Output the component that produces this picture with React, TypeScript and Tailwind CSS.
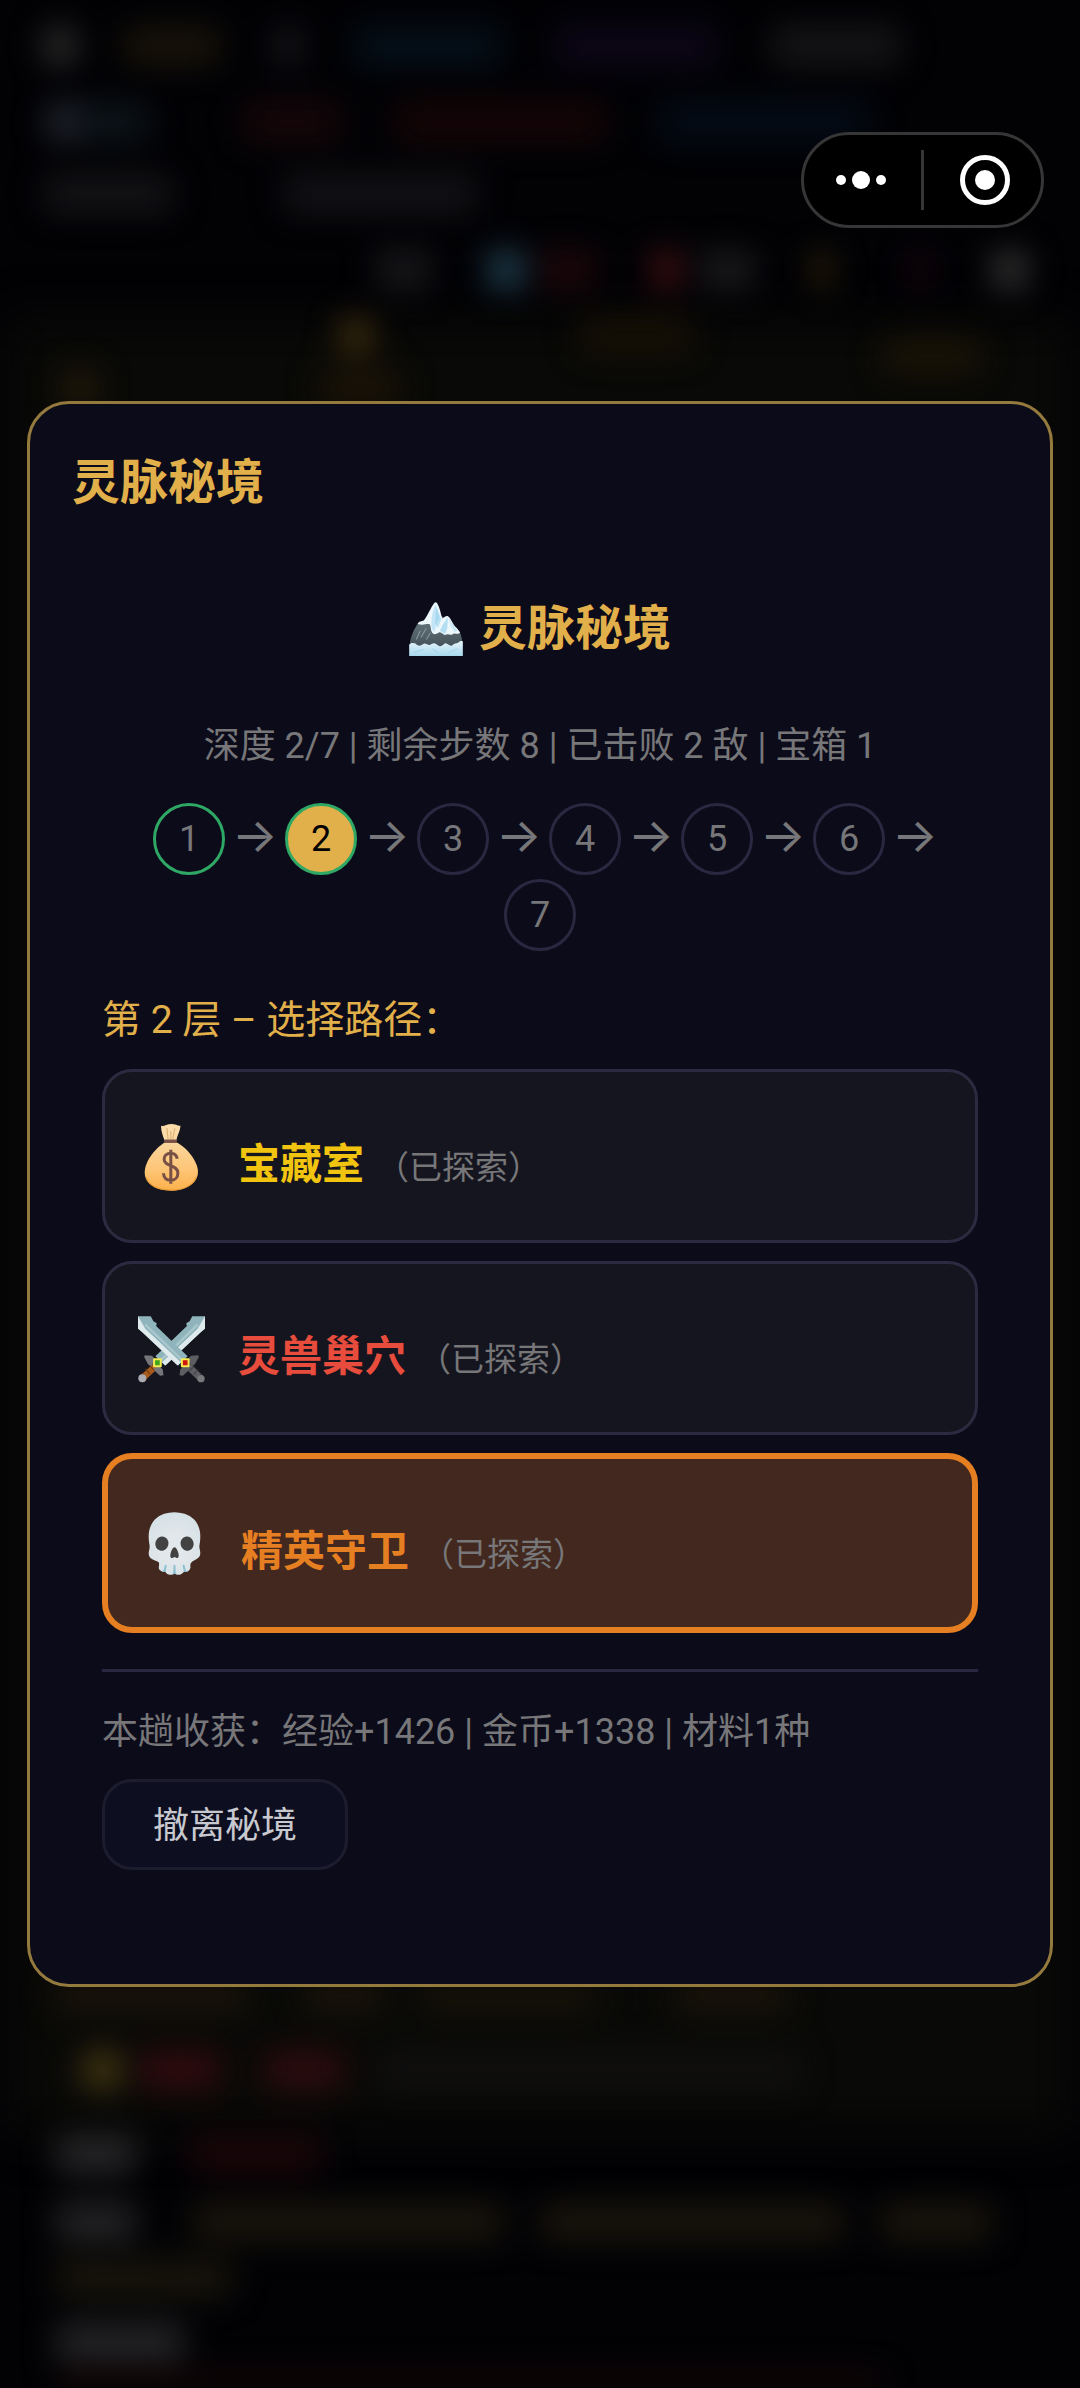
import type { ReactNode } from "react";

type Row = { row: string; items: string[] };

const topRows: Row[] = [
  {
    row: "mt-7 h-9",
    items: [
      "ml-11 w-8 bg-[#2f2f2f]",
      "ml-12 w-24 bg-[#1b150a]",
      "ml-14 w-6 bg-[#1c1c20]",
      "ml-14 w-36 bg-[#05111c]",
      "ml-14 w-40 bg-[#0f071a]",
      "ml-14 w-32 bg-[#171719]",
    ],
  },
  {
    row: "mt-10 h-9",
    items: [
      "ml-12 w-8 bg-[#262a34]",
      "ml-1 w-16 bg-[#0e161b]",
      "ml-24 w-24 bg-[#190709]",
      "ml-14 w-52 bg-[#180607]",
      "ml-14 w-52 bg-[#040d19]",
    ],
  },
  {
    row: "mt-9 h-9",
    items: ["ml-11 w-32 bg-[#151518]", "ml-28 w-48 bg-[#141418]"],
  },
  {
    row: "mt-10 h-9",
    items: [
      "ml-[376px] w-14 bg-[#19191c]",
      "ml-14 w-9 bg-[#234456]",
      "ml-4 w-14 bg-[#20080b]",
      "ml-14 w-7 bg-[#4a1115]",
      "ml-5 w-14 bg-[#1b1b1d]",
      "ml-14 w-5 bg-[#33270a]",
      "ml-20 w-4 bg-[#220710]",
      "ml-16 w-9 bg-[#343434]",
    ],
  },
  {
    row: "mt-8 h-8",
    items: [
      "ml-[340px] w-8 bg-[#46330f]",
      "ml-52 w-28 bg-[#191205]",
      "ml-48 mt-5 w-24 bg-[#1c1506]",
    ],
  },
  {
    row: "mt-5 h-8",
    items: ["ml-16 w-8 bg-[#2a1f0a]", "ml-56 w-20 bg-[#1d1506]"],
  },
];

const bottomRows: Row[] = [
  {
    row: "h-8",
    items: [
      "ml-14 w-48 bg-[#1b150a]",
      "ml-14 w-20 bg-[#1b150a]",
      "ml-9 w-44 bg-[#171308]",
      "ml-20 w-28 bg-[#1b150a]",
    ],
  },
  {
    row: "mt-10 h-9",
    items: [
      "ml-[84px] w-9 bg-[#4c3d12]",
      "ml-5 w-20 bg-[#340b0e]",
      "ml-11 w-20 bg-[#310c0f]",
      "ml-9 w-[420px] bg-[#111010]",
    ],
  },
  {
    row: "mt-12 h-9",
    items: ["ml-14 w-20 bg-[#29292a]", "ml-14 w-32 bg-[#1d0709]"],
  },
  {
    row: "mt-8 h-9",
    items: [
      "ml-14 w-20 bg-[#262627]",
      "ml-14 w-[312px] bg-[#1b160c]",
      "ml-9 w-[304px] bg-[#1b160c]",
      "ml-9 w-28 bg-[#1b160c]",
    ],
  },
  { row: "mt-5 h-9", items: ["ml-14 w-44 bg-[#1a160c]"] },
  { row: "mt-7 h-9", items: ["ml-14 w-32 bg-[#272729]"] },
  { row: "mt-4 h-3", items: ["ml-14 w-[828px] bg-[#1e0805]"] },
];

function BlurredRows({ rows }: { rows: Row[] }) {
  return (
    <div className="relative blur-lg">
      {rows.map((r, i) => (
        <div key={i} className={`flex ${r.row}`}>
          {r.items.map((item, j) => (
            <div key={j} className={`h-full shrink-0 rounded-lg ${item}`} />
          ))}
        </div>
      ))}
    </div>
  );
}

/* The game page behind the dialog, dimmed and out of focus. */
function Backdrop() {
  return (
    <div
      aria-hidden="true"
      className="absolute inset-0 flex flex-col justify-between overflow-hidden bg-[#020205]"
    >
      <div className="absolute inset-x-2 top-80 bottom-64 bg-[#090907] blur-xl" />
      <BlurredRows rows={topRows} />
      <BlurredRows rows={bottomRows} />
    </div>
  );
}

function Capsule() {
  return (
    <div className="absolute top-[132px] right-9 z-10 flex h-24 w-[243px] items-center rounded-full border-3 border-[#363637] bg-black">
      <button type="button" aria-label="更多" className="flex h-full flex-1 items-center justify-center pr-1">
        <svg width="50" height="18" viewBox="0 0 50 18" fill="#fff">
          <circle cx="5" cy="9" r="5" />
          <circle cx="25" cy="9" r="9" />
          <circle cx="45" cy="9" r="5" />
        </svg>
      </button>
      <span className="h-[60px] w-[3px] bg-[#363637]" />
      <button type="button" aria-label="关闭" className="flex h-full flex-1 items-center justify-center pl-1">
        <svg width="50" height="50" viewBox="0 0 50 50">
          <circle cx="25" cy="25" r="22.5" fill="none" stroke="#fff" strokeWidth="5" />
          <circle cx="25" cy="25" r="10" fill="#fff" />
        </svg>
      </button>
    </div>
  );
}

function Mountain() {
  return (
    <svg width="54" height="54" viewBox="33 27 159 160" aria-hidden="true">
      <defs>
        <linearGradient id="rock" x1="0" y1="0" x2="0" y2="1">
          <stop offset="0" stopColor="#6b7a82" />
          <stop offset="1" stopColor="#46535a" />
        </linearGradient>
        <linearGradient id="ice" x1="0" y1="0" x2="0" y2="1">
          <stop offset="0" stopColor="#e6f5fc" />
          <stop offset="1" stopColor="#a9d8ec" />
        </linearGradient>
      </defs>
      <path d="M34 160C36 130 48 105 60 90L80 84L112 60L150 80L182 115C188 125 191 140 191 160Z" fill="url(#rock)" />
      <path
        d="M58 92C62 84 70 84 76 82C88 68 96 44 108 29Q112 25 116 31C124 44 126 60 131 76C136 74 142 66 148 69C158 76 162 94 174 104L184 117C176 126 170 118 164 121C156 128 150 120 142 124C134 128 128 112 120 118C112 122 106 126 100 116C96 108 98 100 94 93C84 90 76 98 58 92Z"
        fill="#edf7fc"
      />
      <path d="M112 33C104 52 96 74 100 108L108 116L116 84L122 76Z" fill="#c3e5f6" />
      <path d="M113 40L128 78L118 104L110 90Z" fill="#8fcdec" opacity="0.55" />
      <path d="M148 72L134 92L124 112L140 122L146 104Z" fill="#b4dff3" />
      <path d="M150 76L156 100L168 116L176 112Z" fill="#c9e8f6" />
      <path d="M84 104L68 132M96 118L84 138M66 112L54 138" stroke="#8b989f" strokeWidth="3" fill="none" />
      <path
        d="M33 154C38 146 46 148 52 150C58 158 66 158 74 152C80 146 88 156 96 154C104 148 110 148 116 154C124 162 132 156 138 150C146 146 152 160 160 156C166 150 172 150 178 148C184 142 188 142 192 144V187H33Z"
        fill="url(#ice)"
      />
      <path d="M46 176L76 168M100 166L120 178M150 176L178 166" stroke="#8ecbe6" strokeWidth="2" fill="none" />
    </svg>
  );
}

function MoneyBag() {
  return (
    <svg width="67" height="67" viewBox="148 193 200 200" aria-hidden="true">
      <defs>
        <linearGradient id="bag" x1="0" y1="0" x2="0" y2="1">
          <stop offset="0" stopColor="#fcd69c" />
          <stop offset="0.55" stopColor="#fdc678" />
          <stop offset="1" stopColor="#fdb04a" />
        </linearGradient>
      </defs>
      <path d="M228 244C222 228 216 212 217 198Q224 200 232 196Q246 191 262 195Q268 199 275 198C274 214 264 228 262 244Z" fill="#fbdba8" />
      <path d="M234 205L238 238M258 206L252 238M246 215V238" stroke="#d9ad6f" strokeWidth="3" fill="none" />
      <path
        d="M228 248C206 260 168 300 168 338C168 374 206 392 246 392C290 392 327 370 327 336C327 302 290 260 263 248Z"
        fill="url(#bag)"
      />
      <path d="M172 352C182 380 212 390 246 390C284 390 312 376 323 350" stroke="#e59a35" strokeWidth="3" fill="none" />
      <rect x="226" y="239" width="38" height="10" rx="4" fill="#795046" />
      <path
        d="M246 270V371M265 297C263 285 255 280 246 280C234 280 226 287 226 298C226 322 267 313 267 339C267 352 258 361 246 361C233 361 225 353 224 340"
        stroke="#795046"
        strokeWidth="9"
        fill="none"
      />
    </svg>
  );
}

function Blade() {
  return (
    <>
      <path d="M28 37H66L74 52L84 58L82 66L176 156L148 184L40 84L28 74Z" fill="#8fb4bb" />
      <path d="M28 37V73L40 84L146 184L156 174L50 74Z" fill="#dfeaec" />
      <path d="M50 62L160 168" stroke="#a9c8cd" strokeWidth="7" fill="none" />
    </>
  );
}

function Swords() {
  return (
    <svg width="67" height="67" viewBox="28 36 200 200" aria-hidden="true">
      <g transform="translate(256 0) scale(-1 1)">
        <Blade />
        <path d="M174 184L216 223" stroke="#a85a1c" strokeWidth="20" />
        <path d="M180 198L194 183M192 209L206 194M204 220L216 206" stroke="#6f3a10" strokeWidth="3" />
        <path d="M207 153L186 155L176 166L188 186L198 180L210 158ZM152 213L154 196L164 186L182 192L176 202L162 214Z" fill="#75757a" />
        <circle cx="215" cy="222" r="12" fill="#aaaab0" />
        <rect x="157" y="162" width="26" height="27" rx="3" fill="#f3ea52" />
        <rect x="163" y="168" width="14" height="15" fill="#41a51c" />
      </g>
      <Blade />
      <path d="M178 186L216 223" stroke="#5d5d62" strokeWidth="20" />
      <path d="M182 200L196 185M194 211L208 196M206 222L218 208" stroke="#3f3f44" strokeWidth="3" />
      <path d="M207 153L186 155L176 166L188 186L198 180L210 158ZM152 213L154 196L164 186L182 192L176 202L162 214Z" fill="#5c5c61" />
      <circle cx="216" cy="223" r="11" fill="#77777c" />
      <rect x="156" y="162" width="26" height="27" rx="3" fill="#f6e94e" />
      <rect x="162" y="168" width="14" height="15" fill="#d0140e" />
    </svg>
  );
}

const steps = [1, 2, 3, 4, 5, 6, 7];

function stepStyle(n: number) {
  if (n === 1) return "border-[#2fa866] text-[#777779]";
  if (n === 2) return "border-[#2fa866] bg-[#e2b04a] text-black";
  return "border-[#2a2840] text-[#777779]";
}

const paths: { name: string; icon: ReactNode; box: string; color: string }[] = [
  { name: "宝藏室", icon: <MoneyBag />, box: "border-3 border-[#2c2a41] bg-[#15151f]", color: "text-[#f1c40f]" },
  { name: "灵兽巢穴", icon: <Swords />, box: "border-3 border-[#2c2a41] bg-[#15151f]", color: "text-[#e74c3c]" },
  { name: "精英守卫", icon: "💀", box: "border-6 border-[#e67e22] bg-[#42281e]", color: "text-[#e67e22]" },
];

export default function App() {
  return (
    <div className="relative flex min-h-screen items-center justify-center font-['Roboto','Noto_Sans_CJK_SC',sans-serif]">
      <Backdrop />
      <Capsule />
      <main
        role="dialog"
        aria-labelledby="dialog-title"
        className="relative w-[95%] rounded-[42px] border-3 border-[#957a3e] bg-[#0c0b19] px-[42px] pt-[45px] pb-[114px]"
      >
        <h1 id="dialog-title" className="text-[48px] leading-[68px] font-bold text-[#e2b04a]">
          灵脉秘境
        </h1>
        <div className="mt-[78px] px-[30px]">
          <h2 className="flex items-center justify-center gap-4 text-[48px] leading-[68px] font-bold text-[#e2b04a]">
            <Mountain />
            灵脉秘境
          </h2>
          <p className="mt-14 text-center text-[36px] leading-[54px] text-[#777779]">
            深度 2/7 | 剩余步数 8 | 已击败 2 敌 | 宝箱 1
          </p>
          <ol className="mt-[30px] flex flex-wrap justify-center gap-x-[18px] gap-y-1 px-6">
            {steps.map((n) => (
              <li key={n} className="contents">
                <span
                  className={`flex size-[72px] items-center justify-center rounded-full border-3 text-[36px] ${stepStyle(n)}`}
                >
                  {n}
                </span>
                {n < 7 && (
                  <span className="flex h-[72px] w-6 items-center justify-center pb-2 font-['Inter'] text-[48px] text-[#777779]">
                    →
                  </span>
                )}
              </li>
            ))}
          </ol>
          <h3 className="mt-[39px] text-[39px] leading-[60px] text-[#e2b04a]">第 2 层 – 选择路径：</h3>
          <div className="mt-[19px] flex flex-col gap-[18px]">
            {paths.map((p) => (
              <button
                key={p.name}
                type="button"
                className={`flex items-center rounded-[30px] px-[27px] pt-[51px] pb-[33px] text-left ${p.box}`}
              >
                <span className="flex h-[84px] w-[78px] items-center justify-center pb-4 text-[57px] leading-[72px]">
                  {p.icon}
                </span>
                <span className="ml-7 flex h-[84px] items-baseline leading-[84px]">
                  <span className={`text-[42px] font-bold ${p.color}`}>{p.name}</span>
                  <span className="ml-3 text-[33px] text-[#777779]">（已探索）</span>
                </span>
              </button>
            ))}
          </div>
          <div className="mt-9 border-t-3 border-[#2a2840] pt-[33px]">
            <p className="text-[36px] leading-[54px] text-[#777779]">
              本趟收获：经验+1426 | 金币+1338 | 材料1种
            </p>
            <button
              type="button"
              className="mt-5 rounded-[30px] border-3 border-[#1d1c2f] bg-[#0d0e20] px-12 pt-[18px] pb-[14px] text-[36px] leading-[53px] text-[#c8c8cf]"
            >
              撤离秘境
            </button>
          </div>
        </div>
      </main>
    </div>
  );
}
